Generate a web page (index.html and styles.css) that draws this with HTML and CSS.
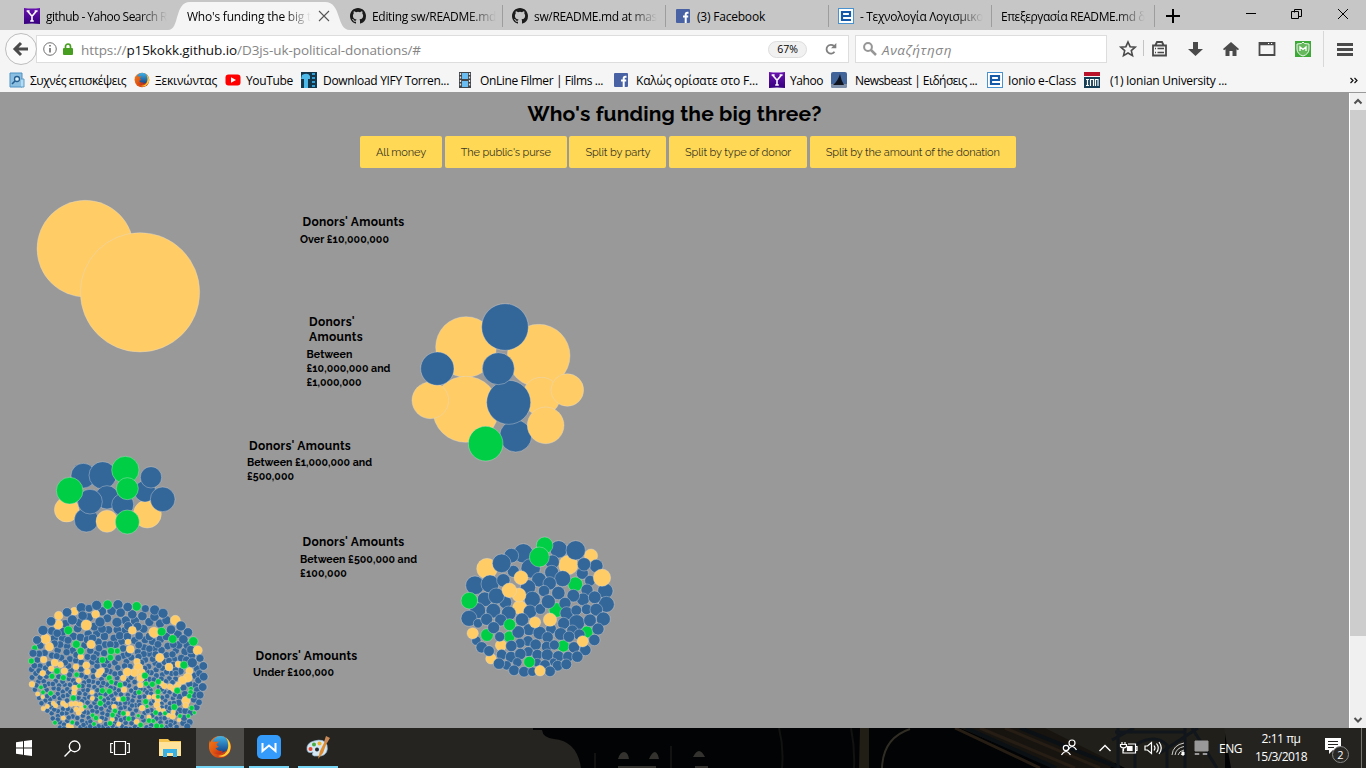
FILE: index.html
```html
<!DOCTYPE html>
<html lang="el">
<head>
<meta charset="utf-8">
<title>Who's funding the big three?</title>
<link rel="stylesheet" href="styles.css">
</head>
<body>
<svg class="defs" width="0" height="0">
  <defs>
    <linearGradient id="purple" x1="0" y1="0" x2="0" y2="1"><stop offset="0" stop-color="#6a14b0"/><stop offset="1" stop-color="#36007e"/></linearGradient>
    <linearGradient id="flame" x1="0" y1="0" x2="1" y2="1"><stop offset="0" stop-color="#f07818"/><stop offset=".5" stop-color="#e35a12"/><stop offset="1" stop-color="#b8241a"/></linearGradient>
    <linearGradient id="globe" x1="0" y1="0" x2="0" y2="1"><stop offset="0" stop-color="#41b4e8"/><stop offset="1" stop-color="#123f86"/></linearGradient>
    <symbol id="yahoo" viewBox="0 0 16 16"><path fill="url(#purple)" d="M0 0Q8 1 16 0V16Q8 15 0 16Z"/><path d="M3.5 3L8 8.3 12.5 3M8 8v5.2M6.2 13h3.6M2.6 3h3M10.6 3h3" fill="none" stroke="#fff" stroke-width="1.6"/></symbol>
    <symbol id="github" viewBox="0 0 16 16"><path fill="#1b1b1b" d="M8 0C3.58 0 0 3.58 0 8c0 3.54 2.29 6.53 5.47 7.59.4.07.55-.17.55-.38 0-.19-.01-.82-.01-1.49-2.01.37-2.53-.49-2.69-.94-.09-.23-.48-.94-.82-1.13-.28-.15-.68-.52-.01-.53.63-.01 1.08.58 1.23.82.72 1.21 1.87.87 2.33.66.07-.52.28-.87.51-1.07-1.78-.2-3.64-.89-3.64-3.95 0-.87.31-1.59.82-2.15-.08-.2-.36-1.02.08-2.12 0 0 .67-.21 2.2.82a7.6 7.6 0 014 0c1.53-1.04 2.2-.82 2.2-.82.44 1.1.16 1.92.08 2.12.51.56.82 1.27.82 2.15 0 3.07-1.87 3.75-3.65 3.95.29.25.54.73.54 1.48 0 1.07-.01 1.93-.01 2.2 0 .21.15.46.55.38A8 8 0 0016 8c0-4.42-3.58-8-8-8z"/></symbol>
    <symbol id="facebook" viewBox="0 0 16 16"><rect x="1" y="1" width="14" height="14" rx="1" fill="#4862a3"/><path d="M13.5 4.8h-1.2q-1.6 0-1.6 1.7V15M8 8.6h5.2" fill="none" stroke="#fff" stroke-width="2"/></symbol>
    <symbol id="eclass" viewBox="0 0 16 16"><rect x=".5" y=".5" width="15" height="15" fill="#fff" stroke="#4a91d0"/><path d="M13 12H4V4h8v4H5" fill="none" stroke="#1559a8" stroke-width="2.2"/></symbol>
    <symbol id="firefox" viewBox="0 0 24 24"><circle cx="12" cy="12" r="11" fill="url(#flame)"/><circle cx="12.500" cy="9.500" r="8.500" fill="url(#globe)"/><path d="M18 2.500Q25 9 21.500 17 17 23.500 10 21q9-1 10-8 1-6-2-10.500" fill="#ffcf36"/><path d="M2 5q0 2 .4 3Q5 5.500 8 7l3-1q-.5 2-2.500 3 0 2 2.500 2.500-2 1.500-3.500 1.500 2 4 7 2.500 1 2-3 4Q3 20 1 12 .8 8 2 5z" fill="url(#flame)"/></symbol>
  </defs>
</svg>

<header class="tabs">
  <div class="tab tab-first"><svg class="ico"><use href="#yahoo"/></svg><span class="fit fade" data-fit="121">github - Yahoo Search R</span></div>
  <div class="tab tab-active">
    <svg class="tab-shape" viewBox="0 0 182 28"><path fill="#f5f5f5" d="M0 28C12 28 6 0 22 0H157C174 0 168 28 182 28Z"/></svg>
    <span class="fit fade" data-fit="124">Who's funding the big t</span>
    <svg class="close" viewBox="0 0 12 12"><path d="M1 1l10 10M11 1L1 11" stroke="#555" stroke-width="1.100"/></svg>
  </div>
  <div class="tab tab-line"><svg class="ico"><use href="#github"/></svg><span class="fit fade" data-fit="124">Editing sw/README.md</span></div>
  <div class="tab tab-line"><svg class="ico"><use href="#github"/></svg><span class="fit fade" data-fit="123">sw/README.md at mas</span></div>
  <div class="tab tab-line"><svg class="ico"><use href="#facebook"/></svg><span class="fit" data-fit="68">(3) Facebook</span></div>
  <div class="tab tab-line"><svg class="ico"><use href="#eclass"/></svg><span class="fit fade" data-fit="123">- Τεχνολογία Λογισμικο</span></div>
  <div class="tab tab-line"><span class="fit fade" data-fit="144">Επεξεργασία README.md δ</span></div>
  <svg class="window-controls" viewBox="0 0 211 30"><g fill="none" stroke="#000"><path d="M11 14h14M18 7v14" stroke-width="2"/><path d="M91 11.500h10M139.500 10.500v-3h7v7h-2.500M136.500 9.500h7v7h-7zM183 7l10 10M193 7l-10 10"/></g></svg>
</header>

<nav class="toolbar">
  <div class="back"><svg viewBox="0 0 32 32"><circle cx="16" cy="16" r="15.500" fill="#fafafa" stroke="#bdbdbd"/><path d="M23 16H11M16 10l-6 6 6 6" fill="none" stroke="#4a4a4a" stroke-width="3"/></svg></div>
  <div class="url">
    <svg class="info" viewBox="0 0 14 14"><circle cx="7" cy="7" r="6.300" fill="none" stroke="#707070"/><path d="M7 6v4.500M7 3v1.500" stroke="#606060" stroke-width="1.500"/></svg>
    <svg class="lock" viewBox="0 0 10 12"><path d="M2.500 6V3.500a2.500 2.500 0 015 0V6" fill="none" stroke="#489e20" stroke-width="1.700"/><rect y="5" width="10" height="7" rx="1" fill="#489e20"/></svg>
    <span class="fit address" data-fit="340">https://<b>p15kokk.github.io</b>/D3js-uk-political-donations/#</span>
    <span class="zoom">67%</span>
    <svg class="reload" viewBox="0 0 12 12"><path d="M9.500 8.800A4.400 4.400 0 119 3" fill="none" stroke="#808080" stroke-width="1.800"/><path d="M11.300 0v5.300H6z" fill="#808080"/></svg>
  </div>
  <div class="search"><svg viewBox="0 0 14 14"><circle cx="5" cy="5" r="3.900" fill="none" stroke="#969696" stroke-width="2"/><path d="M8 8l5 5" stroke="#969696" stroke-width="2.500"/></svg><span class="fit" data-fit="70">Αναζήτηση</span></div>
  <svg class="tools" viewBox="0 0 259 37">
    <g fill="none" stroke="#4a4a4a" stroke-width="1.800">
      <path d="M21 12l2.100 4.700 5.100.5-3.900 3.400 1.200 5-4.500-2.600-4.500 2.600 1.200-5-3.900-3.400 5.100-.5z" stroke-width="1.600"/>
      <path d="M46 15.500h13v10H46zM48.500 15l1.500-3h5l1.500 3"/><path d="M48 18.500h1M50.500 18.500H57M48 22.500h1M50.500 22.500H57" stroke-width="1.500"/>
      <path d="M152.500 13h15v12h-15z"/><path d="M152 14h16" stroke-width="2.500"/>
    </g>
    <path d="M36.500 10v16" stroke="#c4c4c4"/><path d="M216.500 1v36" stroke="#d8d8d8"/>
    <g fill="#4a4a4a"><path d="M86 12h5v7h5l-7.500 7L81 19h5zM124 12l8 7-1 1.200-1.500-1V26h-4v-5h-3v5h-4v-6.800l-1.500 1-1-1.200zM230 13h16v3h-16zM230 18h16v3h-16zM230 23h16v3h-16z"/></g>
    <rect x="188" y="11" width="16" height="16" fill="#3da936"/><path d="M190 14q6 0 6-2 0 2 6 2v5q0 5-6 7-6-2-6-7z" fill="#65b85c" stroke="#eef7ee"/><path d="M193 21v-4l3 2.500 3-2.500v4" fill="none" stroke="#fff" stroke-width="1.300"/>
    <path d="M161 13.500h1.200M164 13.500h1.200" stroke="#fff"/>
  </svg>
</nav>

<nav class="bookmarks">
  <div><svg class="ico" viewBox="0 0 16 16"><path d="M1 1h12v14H1z" fill="#8bbfe2" stroke="#4c91c2"/><path d="M12 7h3v8h-3" fill="#b4dbf1" stroke="#5c9cc8"/><circle cx="8" cy="7" r="2.500" fill="#d9effa" stroke="#255e8e" stroke-width="1.300"/><path d="M6 9l-3 3" stroke="#255e8e" stroke-width="1.600"/></svg><span class="fit" data-fit="96">Συχνές επισκέψεις</span></div>
  <div><svg class="ico"><use href="#firefox"/></svg><span class="fit" data-fit="62">Ξεκινώντας</span></div>
  <div><svg class="ico" viewBox="0 0 16 16"><rect x=".5" y="2.500" width="15" height="11" rx="3" fill="#f00"/><path d="M6 5.200v5.600L11 8z" fill="#fff"/></svg><span class="fit" data-fit="47">YouTube</span></div>
  <div><svg class="ico" viewBox="0 0 16 16"><path d="M0 0h16v16H0z" fill="#14364b"/><path d="M1 3q6-3 8 1v3H7v9H3V7H0z" fill="#4db9e9"/><path d="M11 2h3M11 6h3M11 10h3M11 14h3" stroke="#32a1d6" stroke-width="2"/></svg><span class="fit pad-1" data-fit="126">Download YIFY Torren...</span></div>
  <div><svg class="ico" viewBox="0 0 16 16"><path d="M1 0h12v16H1z" fill="#3f4549"/><path d="M4 1h6v6H4zM4 9h6v6H4z" fill="#69bdf0"/><path d="M2.500 1v14M11.500 1v14" stroke="#dedede" stroke-width="1.300" stroke-dasharray="2 1.500"/></svg><span class="fit pad-1" data-fit="123">OnLine Filmer | Films ...</span></div>
  <div><svg class="ico"><use href="#facebook"/></svg><span class="fit pad-2" data-fit="122">Καλώς ορίσατε στο F...</span></div>
  <div><svg class="ico"><use href="#yahoo"/></svg><span class="fit" data-fit="33">Yahoo</span></div>
  <div><svg class="ico" viewBox="0 0 16 16"><rect width="16" height="16" rx="2" fill="#41649a"/><path d="M0 12h16v2q0 2-2 2H2q-2 0-2-2z" fill="#8092ab"/><path d="M2 13Q7 9 9 2q1 6 4 11z" fill="#10151f"/></svg><span class="fit pad-3" data-fit="122">Newsbeast | Ειδήσεις ...</span></div>
  <div><svg class="ico"><use href="#eclass"/></svg><span class="fit" data-fit="68">Ionio e-Class</span></div>
  <div><svg class="ico ico-shift" viewBox="0 0 16 16"><path d="M0 0h16v4H0z" fill="#b9132b"/><path d="M0 5h16v11H0z" fill="#163f57"/><path d="M2 7.500h3M3.500 7v7M6.500 14V7.500h3V14M11.500 14V7.500h2.500V14M2 13.500h3" fill="none" stroke="#fff" stroke-width="1.200"/></svg><span class="fit pad-5" data-fit="117">(1) Ionian University ...</span></div>
  <svg class="more" viewBox="0 0 8 7"><path d="M.5 1l2.500 2.500L.5 6M4.500 1L7 3.500 4.500 6" fill="none" stroke="#111" stroke-width="1.200"/></svg>
</nav>

<div class="viewport">
  <main class="page">
    <h1><span class="fit" data-fit="294">Who's funding the big three?</span></h1>
    <div class="buttons">
      <button><span class="fit" data-fit="50">All money</span></button>
      <button><span class="fit" data-fit="90">The public's purse</span></button>
      <button><span class="fit" data-fit="65">Split by party</span></button>
      <button><span class="fit" data-fit="106">Split by type of donor</span></button>
      <button><span class="fit" data-fit="174">Split by the amount of the donation</span></button>
    </div>
    <svg class="chart" id="chart" viewBox="0 93 1349 635"></svg>
    <section class="label over-10m"><h2><span class="fit" data-fit="102">Donors' Amounts</span></h2><p><span class="fit" data-fit="89">Over £10,000,000</span></p></section>
    <section class="label over-1m"><h2><span class="fit" data-fit="46">Donors'</span><span class="fit" data-fit="54">Amounts</span></h2><p><span class="fit" data-fit="46">Between</span><span class="fit" data-fit="84">£10,000,000 and</span><span class="fit" data-fit="55">£1,000,000</span></p></section>
    <section class="label over-500k"><h2><span class="fit" data-fit="102">Donors' Amounts</span></h2><p><span class="fit" data-fit="125">Between £1,000,000 and</span><span class="fit" data-fit="47">£500,000</span></p></section>
    <section class="label over-100k"><h2><span class="fit" data-fit="102">Donors' Amounts</span></h2><p><span class="fit" data-fit="117">Between £500,000 and</span><span class="fit" data-fit="47">£100,000</span></p></section>
    <section class="label under-100k"><h2><span class="fit" data-fit="102">Donors' Amounts</span></h2><p><span class="fit" data-fit="81">Under £100,000</span></p></section>
  </main>
  <aside class="scrollbar">
    <svg viewBox="0 0 17 17"><path d="M4.500 10.500L8 7l3.500 3.500" fill="none" stroke="#505050" stroke-width="2"/></svg>
    <div class="thumb"></div>
    <svg viewBox="0 0 17 17"><path d="M4.500 7L8 10.500 11.500 7" fill="none" stroke="#505050" stroke-width="2"/></svg>
  </aside>
</div>

<footer class="taskbar">
  <svg class="wallpaper" viewBox="0 0 1366 40">
    <rect width="1366" height="40" fill="#252420"/>
    <path d="M533 0v2h9q1 8 12 9 23 2 27 29h660V0z" fill="#020304"/>
    <g fill="#33322e"><path d="M618 31q2-7 6-7t5 7zM649 31q3-7 6-7 3 1 4 7zM693 29q3-6 6-6t6 6zM618 38h38v2h-38zM695 38h13v2h-13z"/></g>
    <path d="M860 0h9v40h-10z" fill="#211e16"/><path d="M882 40q1-30 28-39" fill="none" stroke="#302d25" stroke-width="2"/><path d="M779 0q5 20 3 40M851 0q4 20 3 40M671 18v22M595 25v15" fill="none" stroke="#121211" stroke-width="2"/>
    <path d="M960 0h190l-40 40h-55z" fill="#171410"/><path d="M955 0l85 40M980 0l95 40M1005 0l95 40" fill="none" stroke="#261d14" stroke-width="3"/><path d="M966 0l90 40M1020 0l100 40" stroke="#0b1015" stroke-width="4"/>
    <path d="M1045 0h180v40h-100z" fill="#201f19"/><g stroke="#10161b" stroke-width="3"><path d="M1115 4h70M1118 0v40M1185 0v40M1112 12l22-12M1160 25l38-25M1192 0l25 40"/><path d="M1135 40V17q20-12 32 0v23" fill="none"/></g>
    <path d="M1224 0h142v40h-135z" fill="#24231f"/><path d="M1361.500 0v40" stroke="#77756f"/>
  </svg>
  <div class="apps">
    <div class="app"><svg viewBox="0 0 16 16" width="16"><path d="M0 2.300l7-1v6.200H0zM8 1.100L16 0v7.500H8zM0 8.500h7v6.300l-7-1zM8 8.500h8V16l-8-1.100z" fill="#fff"/></svg></div>
    <div class="app"><svg viewBox="0 0 16 16" width="17"><circle cx="10" cy="6" r="5" fill="none" stroke="#fff" stroke-width="1.300"/><path d="M6.500 9.500L.5 15.500" stroke="#fff" stroke-width="1.300"/></svg></div>
    <div class="app"><svg viewBox="0 0 20 16" width="20"><path d="M4.500 1.500h11v13h-11zM3 3.500H.7v9H3M17 3.500h2.300v9H17" fill="none" stroke="#fff" stroke-width="1.200"/></svg></div>
    <div class="app app-files"><svg viewBox="0 0 22 20" width="22"><path d="M0 1h9l2 2h11v15H0z" fill="#f4c44e"/><path d="M0 4h22v14H0z" fill="#ffe39a"/><path d="M4 11h14v8h-4v-4H8v4H4z" fill="#37b1e6"/></svg></div>
    <div class="app app-active"><svg width="24" height="24"><use href="#firefox"/></svg></div>
    <div class="app app-open"><svg viewBox="0 0 24 24" width="24"><rect width="24" height="24" rx="5" fill="#349bfa"/><path d="M5.500 8v8l6.500-5.500 6.500 5.500V8" fill="none" stroke="#fff" stroke-width="2"/></svg></div>
    <div class="app app-open"><svg viewBox="0 0 24 24" width="24"><path d="M1 15Q0 8 8 6q10-3 13 4 2 9-6 11H8q-3-1-1-4-5 2-6-2z" fill="#d4e7f4" stroke="#8cadc4" stroke-width=".7"/><circle cx="4.500" cy="14" r="2" fill="#e84831"/><circle cx="8" cy="9.500" r="2" fill="#4aaa43"/><circle cx="13.500" cy="8.500" r="2" fill="#eeb32a"/><circle cx="11" cy="14.500" r="2" fill="#25282c"/><path d="M12 24l2-8 5-10 2 1-4 11z" fill="#dd8c31"/><path d="M18 7l2-6 4 2-3 5z" fill="#c98957"/></svg></div>
  </div>
  <div class="tray">
    <svg class="tray-icons" viewBox="0 0 158 40" fill="none" stroke="#fff">
      <g stroke-width="1.200"><circle cx="13" cy="15" r="3"/><path d="M9 22q4-7 8.500 0"/><circle cx="7" cy="20" r="2.700"/><path d="M2.500 27q4.500-7 9 0"/><path d="M40.500 23l5.500-5.500 5.500 5.500" stroke-width="1.400"/></g>
      <g stroke-width="1.200"><path d="M69 16h7.500v9H64v-4M76.500 18.500H78v4h-1.500M63 14v2M66 14v2M61.500 16.500h6v2q-3 3-6 0zM64.500 20v3"/><path d="M68.500 18.500h4.500v4h-4.500z" fill="#fff"/>
      <path d="M86 18h2.500l4-3.500v11l-4-3.500H86zM95 17.500q2 2.500 0 5M97.500 15.500q3.500 4.500 0 9M100 14q4.500 6 0 12"/></g>
      <path d="M113 27q1-10 12-12M116 27q1-7 9-8.500M119 27q1-4 6-5M122 27q1-2 3-2" stroke="#d0d0d0"/><path d="M123 24h2v3h-2z" fill="#fff"/>
      <path d="M136 13h13v10h-13zM136 25.500h4v1h-4zM144 25.500h4v1h-4z" fill="#999" stroke="#999"/>
    </svg>
    <span class="fit lang" data-fit="23">ENG</span>
    <div class="clock"><span class="fit" data-fit="39">2:11 πμ</span><span class="fit" data-fit="52">15/3/2018</span></div>
    <div class="notice"><svg viewBox="0 0 18 18"><path d="M0 0h16v12H8l-4 4v-4H0z" fill="#fff"/><path d="M3 3.500h10M3 6.500h10M3 9.500h6" stroke="#252420"/></svg><span class="badge">2</span></div>
  </div>
</footer>
<script src="script.js"></script>
</body>
</html>
```
FILE: styles.css
```css
* { box-sizing: border-box; }
body { margin: 0; width: 1366px; height: 768px; overflow: hidden; display: flex; flex-direction: column; background: #999; font: 12px "Open Sans", "Noto Sans", sans-serif; color: #000; }
svg { display: block; flex: none; }
.defs { position: absolute; }
.fit { display: inline-block; white-space: nowrap; flex: none; }
.fade { overflow: hidden; -webkit-mask-image: linear-gradient(to right, #000 calc(100% - 28px), transparent); mask-image: linear-gradient(to right, #000 calc(100% - 28px), transparent); }
.ico { width: 16px; height: 16px; margin-right: 5px; }
.ico-shift { margin-left: 1px; }

.tabs { height: 30px; background: #c6c6c6; display: grid; grid-template-columns: 172px 169px 162px 163px 163px 163px 163px 211px; }
.tab { display: flex; align-items: center; height: 30px; padding: 2px 0 0 9px; }
.tab-first { padding-left: 24px; }
.tab-active { position: relative; padding-left: 15px; z-index: 1; }
.tab-active .fit { position: relative; }
.tab-shape { position: absolute; left: -4px; top: 2px; width: 182px; height: 28px; }
.tab .close { position: relative; width: 12px; height: 12px; margin-left: 7px; }
.tab-line { background: linear-gradient(#9d9d9d, #9d9d9d) right 5px / 1px 22px no-repeat; }
.tab .ico { margin-right: 6px; }
.window-controls { width: 211px; height: 30px; margin-top: 2px; }

.toolbar { height: 38px; background: #f5f5f5; display: flex; }
.back { position: relative; z-index: 1; width: 32px; height: 32px; margin: 3px 0 0 5px; }
.url { width: 813px; height: 28px; margin: 5px 0 0 -1px; background: #fff; border: 1px solid #ddd; display: flex; align-items: center; }
.info { width: 14px; height: 14px; margin-left: 6px; }
.lock { width: 10px; height: 12px; margin: 0 8px 0 6px; }
.address { font-size: 13.500px; color: #858585; margin-top: 2px; }
.address b { font-weight: 400; color: #111; }
.zoom { margin-left: auto; width: 39px; height: 17px; border: 1px solid #ddd; border-radius: 9px; background: #f1f1f1; font-size: 10.500px; line-height: 15px; text-align: center; }
.reload { width: 12px; height: 12px; margin: 0 11px 0 18px; }
.search { width: 252px; height: 28px; margin: 5px 0 0 6px; padding-left: 7px; background: #fff; border: 1px solid #ddd; display: flex; align-items: center; gap: 5px; font-size: 13.500px; font-style: italic; color: #858585; }
.search svg { width: 14px; height: 14px; }
.search .fit { margin-top: 2px; }
.tools { width: 259px; height: 37px; }

.bookmarks { height: 25px; background: #f5f5f5; border-bottom: 1px solid #999; padding-left: 9px; display: grid; grid-template-columns: 125px 91px 76px 157px 155px 156px 62px 156px 96px 267px 8px; }
.bookmarks div { display: flex; align-items: center; }
.bookmarks .fit { margin-top: 1px; }
.bookmarks .more { width: 8px; height: 7px; margin-top: 9px; }
.pad-1 { margin-left: 1px; }
.pad-2 { margin-left: 2px; }
.pad-3 { margin-left: 3px; }
.pad-5 { margin-left: 5px; }

.viewport { height: 635px; display: flex; }
.page { position: relative; width: 1349px; height: 635px; background: #999; overflow: hidden; font-family: Raleway, Lato, sans-serif; }
.page h1 { margin: 0; padding-top: 7px; height: 43px; font-size: 21px; line-height: 27px; text-align: center; }
.buttons { display: flex; gap: 2.700px; padding-left: 360px; }
.buttons button { height: 32px; padding: 0 16px; border: 0; border-radius: 2px; background: #ffd955; color: #3b3624; font: 11px Raleway, Lato, sans-serif; }
.chart { position: absolute; left: 0; top: 0; width: 1349px; height: 635px; }
.chart circle { stroke: #ddd; stroke-opacity: .55; stroke-width: .7; }
.label { position: absolute; }
.label h2 { margin: 0 0 2px 2.500px; font-size: 12px; line-height: 15px; }
.label p { margin: 0; font-size: 10.600px; font-weight: 700; line-height: 14px; }
.label .fit { display: table; }
.over-10m { left: 300px; top: 122px; }
.over-1m { left: 306.500px; top: 222px; }
.over-500k { left: 247px; top: 346px; }
.over-500k h2 { margin-bottom: 1px; margin-left: 2px; }
.over-100k { left: 300px; top: 442px; }
.under-100k { left: 253px; top: 556px; }
.under-100k h2 { margin-bottom: 1px; }

.scrollbar { width: 17px; height: 635px; background: #f0f0f0; border-left: 1px solid #fff; display: flex; flex-direction: column; }
.scrollbar svg { width: 17px; height: 17px; }
.thumb { height: 526px; background: #cdcdcd; margin-bottom: 75px; }

.taskbar { position: relative; height: 40px; display: flex; justify-content: space-between; color: #fff; }
.wallpaper { position: absolute; inset: 0; width: 1366px; height: 40px; }
.apps, .tray { position: relative; display: flex; }
.app { width: 48px; height: 40px; display: flex; align-items: center; justify-content: center; }
.app-files { width: 52px; }
.app-active { background: #4f4d49; border-bottom: 2px solid #76d4f5; }
.app-open { width: 40px; margin-left: 5px; border-bottom: 2px solid #76d4f5; }
.app-open + .app-open { margin-left: 9px; }
.tray { align-items: center; width: 307px; }
.tray-icons { width: 158px; height: 40px; }
.lang { margin-left: 2px; font-size: 12px; }
.clock { width: 52px; margin-left: 13px; display: flex; flex-direction: column; align-items: center; font-size: 12px; line-height: 18px; }
.notice { position: relative; width: 30px; height: 18px; margin: -2px 0 0 18px; }
.notice svg { width: 18px; height: 18px; }
.badge { position: absolute; left: 7px; top: 8px; width: 17px; height: 17px; border: 1px solid #888; border-radius: 50%; background: #292825; font-size: 11px; line-height: 15px; text-align: center; }
```
FILE: script.js
```js
document.querySelectorAll('.fit').forEach(el => {
  const target = Number(el.dataset.fit);
  const natural = el.getBoundingClientRect().width;
  el.style.letterSpacing = (target - natural) / el.textContent.length + 'px';
  el.style.width = target + 'px';
});

const COLORS = { Y: '#ffcc66', B: '#336699', G: '#00cf46' };
const chart = document.getElementById('chart');

function bubble(color, x, y, r) {
  const c = document.createElementNS('http://www.w3.org/2000/svg', 'circle');
  c.setAttribute('cx', x.toFixed(2));
  c.setAttribute('cy', y.toFixed(2));
  c.setAttribute('r', r.toFixed(2));
  c.setAttribute('fill', COLORS[color]);
  chart.appendChild(c);
}

// Cluster coordinates are stored in thirds of a pixel from the cluster origin.
function parse(text) {
  return text.trim().split(/\s+/).map(s => [s[0], ...s.slice(1).split(',').map(Number)]);
}
function cluster(ox, oy, text) {
  parse(text).forEach(([c, x, y, r]) => bubble(c, ox + x / 3, oy + y / 3, r / 3));
}

cluster(0, 0, 'Y256,746,145 Y420,877,179');
cluster(400, 295, `Y198,156,91 Y416,182,94 Y197,343,99 Y424,304,57 Y91,316,55 B347,423,48
 B112,221,50 B315,96,70 B326,322,66 B295,221,48 Y502,285,49 Y437,391,55 G257,446,52`);
cluster(40, 445, `Y80,194,37 B139,225,36 Y322,207,42 Y201,229,33 B130,92,37 B188,91,41 G256,75,41
 B201,157,35 B315,139,32 B248,179,33 B150,170,37 B333,97,32 B368,163,37 G262,131,33 G262,231,36 G89,137,40`);
cluster(450, 530, `Y111,116,31 Y355,105,29 Y423,77,20 G376,163,22 Y209,232,21 Y153,346,17 Y123,386,16 G340,348,18
 G411,306,18 G111,315,19 G178,320,17 G319,240,22 B75,166,28 B220,70,29 B184,77,22 B326,58,26 B190,124,18
 B242,115,29 B307,96,21 B305,127,21 B439,108,20 B397,130,18 B338,146,24 B420,152,16 B267,149,22 B234,172,23
 B299,160,20 B466,183,23 B411,180,18 B120,162,27 B160,151,20 B104,208,22 B166,217,19 B139,198,24 B247,208,24
 B282,183,17 B325,189,20 B399,208,19 B370,197,19 B469,223,24 B434,202,19 B345,220,18 B83,242,24 B130,242,22
 B176,250,22 B240,245,20 B271,237,16 B295,215,21 B350,250,20 B410,238,16 B379,241,16 B439,239,19 B57,265,24
 B84,280,14 B110,268,18 B152,270,18 B216,269,20 B380,278,24 B341,280,18 B420,271,19 B460,267,21 B131,293,18
 B237,299,18 B205,306,19 B303,297,16 B269,309,20 B367,302,17 B332,312,19 B444,297,18 B388,314,17 B357,320,17
 B79,332,14 B149,320,15 B234,333,16 B293,322,17 B433,330,17 B95,352,17 B210,340,15 B184,348,17 B290,350,16
 B257,344,17 B313,345,15 B372,352,17 B406,360,17 B117,363,16 B155,374,16 B235,365,15 B183,381,17 B211,372,17
 B262,374,16 B292,375,18 B325,379,17 B354,380,16 B382,380,17 B170,406,14 B147,401,17 B202,397,14 B192,421,16
 B222,425,16 B247,425,14 B262,398,13 B310,396,12 B285,405,16 B323,407,16 B349,403,16 B300,424,16
 B155,100,28 B377,61,29 B402,103,20 G284,46,25 G268,81,30 G58,212,25 G179,284,18 G238,396,17
 Y213,143,21 Y207,195,21 Y178,181,22 Y456,143,26 Y255,277,17 Y300,269,20 Y68,310,17 Y398,334,17 Y270,422,16`);

const small = parse(`Y116,77,13 Y163,64,12 Y115,104,14 Y227,73,12 Y199,105,16 Y77,147,15 Y88,170,13 Y213,163,13
 Y337,121,12 Y402,127,16 Y466,91,15 Y533,181,14 Y324,156,9 Y331,178,12 Y419,203,13 Y71,209,10 Y182,200,9
 Y104,218,11 Y122,224,9 Y199,226,11 Y202,245,9 Y168,230,9 Y68,250,9 Y94,236,9 Y133,243,10 Y246,241,8 Y234,254,9
 Y240,246,10 Y351,215,10 Y355,233,14 Y343,248,12 Y322,246,13 Y365,247,11 Y362,264,12 Y361,285,9 Y447,231,12
 Y475,223,10 Y508,243,11 Y503,263,14 Y487,271,12 Y475,284,9 Y310,264,9 Y312,299,9 Y36,283,9 Y53,312,7 Y68,321,6
 Y176,271,8 Y164,294,9 Y162,308,8 Y216,307,7 Y217,325,7 Y425,281,8 Y433,288,9 Y450,290,9 Y460,296,9 Y469,290,8
 Y498,332,13 Y497,346,9 Y387,321,7 Y403,320,8 Y413,330,9 Y411,345,10 Y416,358,8 Y366,354,9 Y282,350,8 Y295,327,7
 Y129,340,8 Y70,356,7 Y82,349,7 Y100,340,7 Y107,347,7 Y138,347,7 Y154,342,8 Y167,341,8 Y181,343,8 Y169,358,8
 Y185,357,8 Y176,368,8 Y130,384,7 Y145,407,7 Y155,410,6 Y323,371,7 Y350,395,8 Y296,402,7 Y240,393,6 Y277,388,7
 Y430,362,7 Y445,376,7 Y458,379,9 Y460,366,7 Y387,381,7 Y477,390,6
 G263,44,14 G350,49,14 G145,121,13 G425,125,13 G458,147,13 G520,154,14 G44,174,9 G34,213,9 G169,163,12 G182,183,11
 G273,183,11 G292,183,9 G271,203,10 G247,210,10 G492,225,12 G111,243,10 G96,259,9 G130,263,9 G170,254,8 G177,288,7
 G268,264,9 G274,276,8 G300,285,9 G268,304,9 G247,302,9 G375,257,10 G378,281,8 G397,283,9 G415,275,9 G414,305,9
 G357,307,8 G472,302,10 G513,296,7 G512,307,8 G508,318,8 G63,292,7 G69,307,7 G92,310,8 G160,324,9 G242,323,7
 G241,340,9 G310,327,9 G377,335,9 G381,349,6 G463,351,10 G515,354,8 G407,368,8 G435,370,7 G480,378,7 G505,378,7
 G523,368,6 G218,376,7 G228,384,8 G222,402,7 G285,363,8 G278,375,8 G310,370,8 G326,386,8 G355,377,6 G362,405,8
 G387,392,8 G400,393,7 G410,408,9 G425,408,7 G270,400,8 G105,398,7 G157,397,7 G195,350,6 G414,320,7
 B141,67,14 B184,53,15 B207,55,12 B230,46,15 B294,44,15 B323,51,14 B376,56,12 B404,60,15 B429,70,15 B483,108,15
 B504,127,14 B93,94,14 B69,121,15 B51,150,13 B157,90,15 B188,77,14 B302,68,14 B262,85,13 B240,96,15 B291,97,15
 B490,148,14 B453,119,14 B517,218,15 B540,205,12 B550,228,13 B551,260,13 B548,291,13 B540,315,12 B537,337,10 B39,190,12`);

// Centres of the remaining bubbles stay inside this outline.
const outline = [[150,78],[185,60],[230,48],[294,46],[350,52],[404,62],[435,78],[483,108],[515,140],[530,170],[542,210],[549,260],[546,300],[537,335],[525,365],[508,400],[500,430],[122,430],[98,392],[72,355],[48,310],[36,280],[33,240],[37,200],[50,155],[75,118],[110,85]];
function inside(x, y) {
  let hit = false;
  for (let i = 0, j = outline.length - 1; i < outline.length; j = i++) {
    const [xi, yi] = outline[i], [xj, yj] = outline[j];
    if (yi > y !== yj > y && x < (xj - xi) * (y - yi) / (yj - yi) + xi) hit = !hit;
  }
  return hit;
}
let seed = 20180315;
const random = () => (seed = (seed * 1664525 + 1013904223) % 4294967296) / 4294967296;
const filler = [];
[0.9, 0.78, 0.66].forEach(tight => {
  for (let n = 0; n < 14000; n++) {
    const x = 25 + random() * 535, y = 35 + random() * 395;
    if (!inside(x, y)) continue;
    const t = Math.min(1, Math.max(0, (y - 80) / 210));
    const r = 14 - 6 * t + (x > 470 ? 2.5 * t : 0);
    const clear = ([, a, b, s]) => Math.hypot(a - x, b - y) > (r + s) * tight;
    if (small.every(clear) && filler.every(clear)) filler.push(['B', x, y, r]);
  }
});
filler.concat(small).forEach(([c, x, y, r]) => bubble(c, 20 + x / 3, 590 + y / 3, r / 3));
```
